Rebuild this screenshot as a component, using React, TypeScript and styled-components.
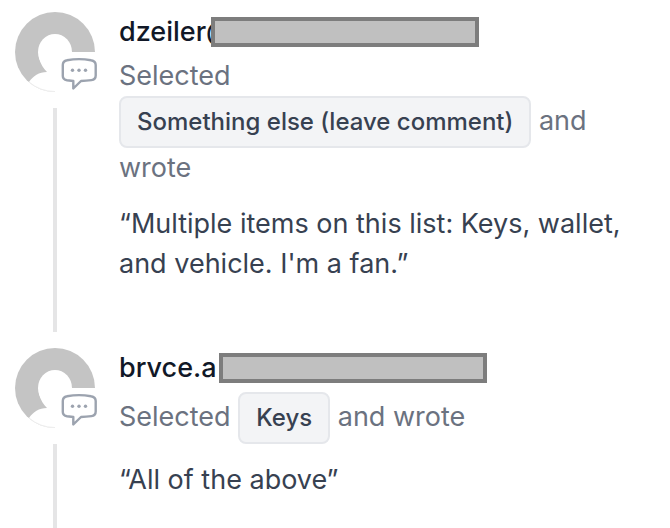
import React from "react";
import styled, { createGlobalStyle } from "styled-components";

const GlobalStyle = createGlobalStyle`
  *, *::before, *::after { box-sizing: border-box; }
  body {
    margin: 0;
    background: #ffffff;
    font-family: Inter, "Liberation Sans", sans-serif;
  }
`;

const Feed = styled.ul`
  display: flex;
  flex-direction: column;
  min-height: 100vh;
  margin: 0;
  padding: 12px 32px 0 15px;
  list-style: none;
`;

const Item = styled.li`
  display: flex;
  gap: 24px;

  &:last-child {
    flex: 1;
  }
`;

const Rail = styled.div`
  display: flex;
  flex-direction: column;
  align-items: center;
  gap: 16px;
  flex: none;
  width: 80px;
`;

const AvatarFrame = styled.div`
  position: relative;
  width: 80px;
  height: 80px;

  > svg {
    display: block;
  }
`;

const CommentMark = styled.span`
  position: absolute;
  left: 40px;
  top: 40px;
  width: 48px;
  height: 44px;
  background: #ffffff;

  > svg {
    display: block;
  }
`;

const Connector = styled.div<{ $open?: boolean }>`
  flex: 1;
  width: 4px;
  margin-bottom: ${(p) => (p.$open ? "0" : "16px")};
  background: #e5e5e6;
`;

const Body = styled.div<{ $last?: boolean }>`
  flex: 1;
  min-width: 0;
  padding-bottom: ${(p) => (p.$last ? "0" : "64px")};
`;

const Name = styled.div`
  display: flex;
  align-items: center;
  height: 40px;
  color: #111827;
  font-size: 27px;
  font-weight: 500;
  line-height: 42px;
`;

const Redaction = styled.span<{ $cover: number }>`
  z-index: 1;
  width: 268px;
  height: 30px;
  margin-left: ${(p) => -p.$cover}px;
  border: 4px solid #7d7d7d;
  background: #c0c0c0;
`;

const Meta = styled.p`
  margin: 4px 0 0;
  color: #6b7280;
  font-size: 27px;
  line-height: 40px;
`;

const Choice = styled.span`
  display: inline-block;
  padding: 0 16px;
  border: 2px solid #e5e7eb;
  border-radius: 8px;
  background: #f3f4f6;
  color: #374151;
  font-size: 24px;
  font-weight: 500;
  line-height: 48px;
  vertical-align: baseline;
`;

const Quote = styled.p`
  margin: 16px 0 0;
  color: #374151;
  font-size: 27px;
  line-height: 40px;
`;

function Avatar({ id }: { id: string }) {
  return (
    <AvatarFrame>
      <svg width="80" height="80" viewBox="0 0 80 80" aria-hidden="true">
        <clipPath id={id}>
          <circle cx="40" cy="40" r="40" />
        </clipPath>
        <g clipPath={`url(#${id})`}>
          <rect width="80" height="80" fill="#c4c4c4" />
          <ellipse cx="40" cy="40" rx="17" ry="18" fill="#fff" />
          <path d="M24 46 Q26 54 32 60 C24 60 18 64 14 70 L14 80 H80 V50 Z" fill="#fff" />
        </g>
        <path d="M14 70 A40 40 0 0 0 40 79.5" fill="none" stroke="#ededed" />
      </svg>
      <CommentMark>
        <svg width="48" height="44" viewBox="0 0 48 44" aria-hidden="true">
          <path
            d="M12 8.300 Q24 6 36 8.300 Q40.700 9 40.700 13 V23.500 Q40.700 27.500 36.500 28.100 Q31 28.800 26 29 L18.300 36.500 V29 L12 28.200 Q7.800 27.500 7.800 24 V13 Q7.800 9 12 8.300 Z"
            fill="#fff"
            stroke="#9ca3af"
            strokeWidth="2.400"
            strokeLinejoin="round"
          />
          <g fill="#9ca3af">
            <circle cx="17.500" cy="18.300" r="1.700" />
            <circle cx="24" cy="18.300" r="1.700" />
            <circle cx="30.500" cy="18.300" r="1.700" />
          </g>
        </svg>
      </CommentMark>
    </AvatarFrame>
  );
}

interface Entry {
  name: string;
  cover: number;
  choice: string;
  comment: string;
}

const entries: Entry[] = [
  {
    name: "dzeiler@",
    cover: 22,
    choice: "Something else (leave comment)",
    comment: "“Multiple items on this list: Keys, wallet, and vehicle. I'm a fan.”",
  },
  { name: "brvce.a", cover: -2, choice: "Keys", comment: "“All of the above”" },
];

export default function App() {
  return (
    <>
      <GlobalStyle />
      <Feed>
        {entries.map((entry, i) => {
          const last = i === entries.length - 1;
          return (
            <Item key={entry.name}>
              <Rail>
                <Avatar id={`avatar-${i}`} />
                <Connector $open={last} />
              </Rail>
              <Body $last={last}>
                <Name>
                  {entry.name}
                  <Redaction $cover={entry.cover} />
                </Name>
                <Meta>
                  Selected <Choice>{entry.choice}</Choice> and wrote
                </Meta>
                <Quote>{entry.comment}</Quote>
              </Body>
            </Item>
          );
        })}
      </Feed>
    </>
  );
}
